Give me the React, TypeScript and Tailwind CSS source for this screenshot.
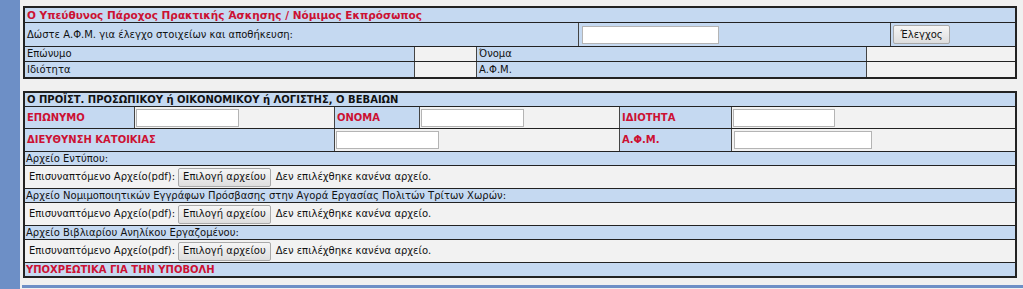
import React from 'react'

const red = 'text-[#cc1133]'

const FileRow = () => (
  <div className="flex h-[24px] items-center border-y border-[#222] bg-[#f2f2f2] pl-[4px]">
    <span>Επισυναπτόμενο Αρχείο(pdf):</span>
    <button className="ml-[3px] h-[19px] rounded-[2px] border border-[#a9a9a9] bg-gradient-to-b from-[#f6f6f6] to-[#dedede] px-[4px] text-[10px] leading-none text-[#111]">
      Επιλογή αρχείου
    </button>
    <span className="ml-[5px]">Δεν επιλέχθηκε κανένα αρχείο.</span>
  </div>
)

const Input = ({ w }: { w: string }) => (
  <div className={`h-[18px] ${w} border border-[#b4b4b4] bg-white`} />
)

const App = () => {
  return (
    <div className="flex h-[289px] w-[1023px] overflow-hidden bg-[#f0f0f0] font-['DejaVu_Sans',sans-serif] text-[10px] leading-none text-[#111]">
      <div className="w-[20px] shrink-0 bg-[#6d8fc6]" />
      <div className="flex w-[1003px] flex-col">
        <div className="ml-[3px] mt-[6px] w-[994px] border-2 border-[#222]">
          <div className={`flex h-[15px] items-center border-b border-[#222] bg-[#c5d9f1] pl-[2px] text-[10.5px] font-bold ${red}`}>
            Ο Υπεύθυνος Πάροχος Πρακτικής Άσκησης / Νόμιμος Εκπρόσωπος
          </div>
          <div className="flex h-[24px] border-b border-[#222] bg-[#c5d9f1]">
            <div className="flex w-[553px] items-center pl-[2px]">Δώστε Α.Φ.Μ. για έλεγχο στοιχείων και αποθήκευση:</div>
            <div className="flex w-[312px] items-center border-l border-[#444] pl-[3px]">
              <Input w="w-[137px]" />
            </div>
            <div className="flex flex-1 items-center border-l border-[#444] pl-[2px]">
              <button className="h-[19px] w-[57px] rounded-[2px] border border-[#a9a9a9] bg-gradient-to-b from-[#f6f6f6] to-[#dedede] text-[10px] text-[#111]">
                Έλεγχος
              </button>
            </div>
          </div>
          <div className="flex h-[15px] border-b border-[#222]">
            <div className="flex w-[389px] items-center bg-[#c5d9f1] pl-[2px]">Επώνυμο</div>
            <div className="w-[62px] border-l border-[#444] bg-[#f2f2f2]" />
            <div className="flex w-[390px] items-center border-l border-[#444] bg-[#c5d9f1] pl-[2px]">Όνομα</div>
            <div className="flex-1 border-l border-[#444] bg-[#f2f2f2]" />
          </div>
          <div className="flex h-[15px]">
            <div className="flex w-[389px] items-center bg-[#c5d9f1] pl-[2px]">Ιδιότητα</div>
            <div className="w-[62px] border-l border-[#444] bg-[#f2f2f2]" />
            <div className="flex w-[390px] items-center border-l border-[#444] bg-[#c5d9f1] pl-[2px]">Α.Φ.Μ.</div>
            <div className="flex-1 border-l border-[#444] bg-[#f2f2f2]" />
          </div>
        </div>

        <div className="ml-[3px] mt-[12px] w-[994px] border-2 border-[#222]">
          <div className="flex h-[14px] items-center border-b border-[#222] bg-[#c5d9f1] pl-[2px] font-bold">
            Ο ΠΡΟΪΣΤ. ΠΡΟΣΩΠΙΚΟΥ ή ΟΙΚΟΝΟΜΙΚΟΥ ή ΛΟΓΙΣΤΗΣ, Ο ΒΕΒΑΙΩΝ
          </div>
          <div className="flex h-[22px] border-b border-[#222] font-bold">
            <div className={`flex w-[109px] items-center bg-[#c5d9f1] pl-[2px] ${red}`}>ΕΠΩΝΥΜΟ</div>
            <div className="flex w-[200px] items-center border-l border-[#444] bg-[#f2f2f2] pl-[1px]">
              <Input w="w-[103px]" />
            </div>
            <div className={`flex w-[85px] items-center border-l border-[#444] bg-[#c5d9f1] pl-[2px] ${red}`}>ΟΝΟΜΑ</div>
            <div className="flex w-[200px] items-center border-l border-[#444] bg-[#f2f2f2] pl-[1px]">
              <Input w="w-[103px]" />
            </div>
            <div className={`flex w-[112px] items-center border-l border-[#444] bg-[#c5d9f1] pl-[2px] ${red}`}>ΙΔΙΟΤΗΤΑ</div>
            <div className="flex flex-1 items-center border-l border-[#444] bg-[#f2f2f2] pl-[1px]">
              <Input w="w-[102px]" />
            </div>
          </div>
          <div className="flex h-[22px] font-bold">
            <div className={`flex w-[309px] items-center bg-[#c5d9f1] pl-[2px] ${red}`}>ΔΙΕΥΘΥΝΣΗ ΚΑΤΟΙΚΙΑΣ</div>
            <div className="flex w-[285px] items-center border-l border-[#444] bg-[#f2f2f2] pl-[1px]">
              <Input w="w-[103px]" />
            </div>
            <div className={`flex w-[112px] items-center border-l border-[#444] bg-[#c5d9f1] pl-[2px] ${red}`}>Α.Φ.Μ.</div>
            <div className="flex flex-1 items-center border-l border-[#444] bg-[#f2f2f2] pl-[2px]">
              <Input w="w-[138px]" />
            </div>
          </div>
          <div className="flex h-[14px] items-center border-t border-[#222] bg-[#c5d9f1] pl-[1px]">Αρχείο Εντύπου:</div>
          <FileRow />
          <div className="flex h-[13px] items-center bg-[#c5d9f1] pl-[1px]">
            Αρχείο Νομιμοποιητικών Εγγράφων Πρόσβασης στην Αγορά Εργασίας Πολιτών Τρίτων Χωρών:
          </div>
          <FileRow />
          <div className="flex h-[13px] items-center bg-[#c5d9f1] pl-[1px]">Αρχείο Βιβλιαρίου Ανηλίκου Εργαζομένου:</div>
          <FileRow />
          <div className={`flex h-[13px] items-center bg-[#c5d9f1] pl-[1px] font-bold ${red}`}>ΥΠΟΧΡΕΩΤΙΚΑ ΓΙΑ ΤΗΝ ΥΠΟΒΟΛΗ</div>
        </div>

        <div className="ml-[2px] mt-[7px] h-[3px] bg-[#6d8fc6]" />
      </div>
    </div>
  )
}

export default App
